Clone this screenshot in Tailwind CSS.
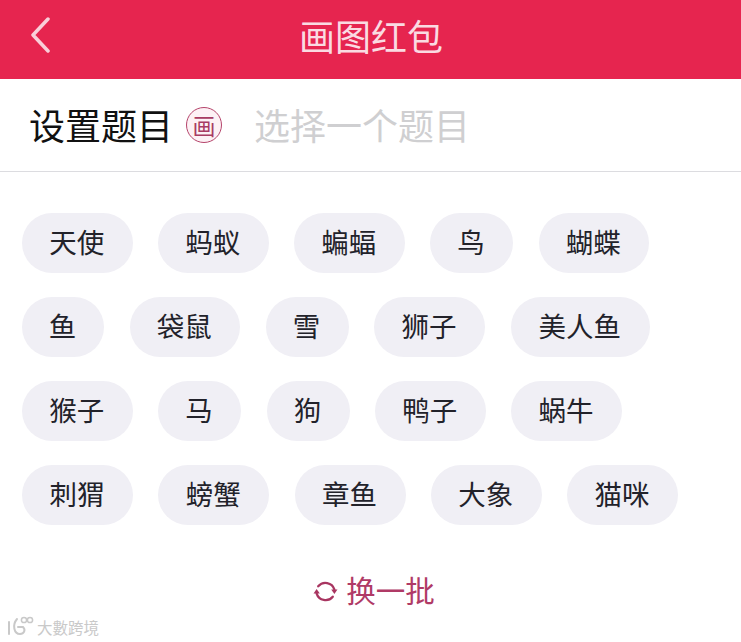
<!DOCTYPE html>
<html>
<head>
<meta charset="utf-8">
<title>画图红包</title>
<script src="https://cdn.jsdelivr.net/npm/@tailwindcss/browser@4"></script>
</head>
<body class="relative w-[741px] h-[642px] overflow-hidden bg-white font-['Noto_Sans_CJK_SC','Liberation_Sans',sans-serif]">

  <header class="relative h-[79px] bg-[#e6254f] flex items-center justify-center">
    <svg class="absolute left-[30px] top-[17px]" width="21" height="36" viewBox="0 0 21 36" fill="none" stroke="#f9cfd9" stroke-width="3.5" stroke-linecap="round" stroke-linejoin="round">
      <path d="M18 2 L3 18 L18 34"/>
    </svg>
    <h1 class="text-[36px] leading-none font-normal text-[#fadbe2] ml-[1px] -mt-[9px]">画图红包</h1>
  </header>

  <div class="h-[93px] border-b border-[#dcdce0] flex items-center pl-[30px]">
    <span class="text-[36px] leading-none text-[#111111] -mt-[3px] -ml-[1px]">设置题目</span>
    <span class="ml-[13px] w-[36px] h-[36px] rounded-full border-[1.5px] border-[#b5446b] bg-[#fdf1f5] flex items-center justify-center text-[23px] leading-none text-[#a83c63]">画</span>
    <span class="ml-[32px] text-[36px] leading-none font-normal text-[#cfcfd1] -mt-[3px]">选择一个题目</span>
  </div>

  <div class="pl-[22px] pt-[41px] flex flex-col gap-[24px] text-[27.5px] leading-none text-[#22222a]">
    <div class="flex gap-[25.5px]">
      <span class="h-[60px] w-[110.5px] pb-[2px] pr-[1px] rounded-full bg-[#f0eff5] flex items-center justify-center">天使</span>
      <span class="h-[60px] w-[110.5px] pb-[2px] pr-[1px] rounded-full bg-[#f0eff5] flex items-center justify-center">蚂蚁</span>
      <span class="h-[60px] w-[110.5px] pb-[2px] pr-[1px] rounded-full bg-[#f0eff5] flex items-center justify-center">蝙蝠</span>
      <span class="h-[60px] w-[83px] pb-[2px] pr-[1px] rounded-full bg-[#f0eff5] flex items-center justify-center">鸟</span>
      <span class="h-[60px] w-[110.5px] pb-[2px] pr-[1px] rounded-full bg-[#f0eff5] flex items-center justify-center">蝴蝶</span>
    </div>
    <div class="flex gap-[25.5px]">
      <span class="h-[60px] w-[82px] pb-[2px] pr-[1px] rounded-full bg-[#f0eff5] flex items-center justify-center">鱼</span>
      <span class="h-[60px] w-[110.5px] pb-[2px] pr-[1px] rounded-full bg-[#f0eff5] flex items-center justify-center">袋鼠</span>
      <span class="h-[60px] w-[83px] pb-[2px] pr-[1px] rounded-full bg-[#f0eff5] flex items-center justify-center">雪</span>
      <span class="h-[60px] w-[111px] pb-[2px] pr-[1px] rounded-full bg-[#f0eff5] flex items-center justify-center">狮子</span>
      <span class="h-[60px] w-[139.5px] pb-[2px] pr-[1px] rounded-full bg-[#f0eff5] flex items-center justify-center">美人鱼</span>
    </div>
    <div class="flex gap-[25.5px]">
      <span class="h-[60px] w-[110.5px] pb-[2px] pr-[1px] rounded-full bg-[#f0eff5] flex items-center justify-center">猴子</span>
      <span class="h-[60px] w-[83px] pb-[2px] pr-[1px] rounded-full bg-[#f0eff5] flex items-center justify-center">马</span>
      <span class="h-[60px] w-[83px] pb-[2px] pr-[1px] rounded-full bg-[#f0eff5] flex items-center justify-center">狗</span>
      <span class="h-[60px] w-[110.5px] pb-[2px] pr-[1px] rounded-full bg-[#f0eff5] flex items-center justify-center">鸭子</span>
      <span class="h-[60px] w-[111px] pb-[2px] pr-[1px] rounded-full bg-[#f0eff5] flex items-center justify-center">蜗牛</span>
    </div>
    <div class="flex gap-[25.25px]">
      <span class="h-[60px] w-[111px] pb-[2px] pr-[1px] rounded-full bg-[#f0eff5] flex items-center justify-center">刺猬</span>
      <span class="h-[60px] w-[111px] pb-[2px] pr-[1px] rounded-full bg-[#f0eff5] flex items-center justify-center">螃蟹</span>
      <span class="h-[60px] w-[111px] pb-[2px] pr-[1px] rounded-full bg-[#f0eff5] flex items-center justify-center">章鱼</span>
      <span class="h-[60px] w-[111px] pb-[2px] pr-[1px] rounded-full bg-[#f0eff5] flex items-center justify-center">大象</span>
      <span class="h-[60px] w-[111px] pb-[2px] pr-[1px] rounded-full bg-[#f0eff5] flex items-center justify-center">猫咪</span>
    </div>
  </div>

  <div class="mt-[52px] flex items-center justify-center pl-[7px] text-[#b03a66]">
    <svg class="mt-[1px]" width="25" height="25" viewBox="0 0 24 24" fill="none" stroke="#a83560" stroke-width="2.2" stroke-linecap="round">
      <path d="M5 7 A9 9 0 0 1 20.5 10"/>
      <path d="M19 17 A9 9 0 0 1 3.5 14"/>
      <path d="M17.5 10 H23.5 L20.5 14.5 Z" fill="#a83560" stroke="none"/>
      <path d="M0.5 14 H6.5 L3.5 9.5 Z" fill="#a83560" stroke="none"/>
    </svg>
    <span class="ml-[8px] text-[29.5px] leading-none -mt-[2px]">换一批</span>
  </div>

  <!-- watermark -->
  <div class="absolute left-[7px] top-[616px] flex items-center text-[#c9c9c9]">
    <svg width="27" height="20" viewBox="0 0 27 20" fill="none" stroke="#c9c9c9" stroke-width="2" stroke-linecap="round">
      <path d="M2 6 V18"/>
      <path d="M10 3 C5 9 7 18 13 18 C17 18 19 14 16 11 L11 11"/>
      <circle cx="17" cy="4" r="2.6" stroke-width="1.5"/>
      <circle cx="23" cy="4" r="2.6" stroke-width="1.5"/>
    </svg>
    <span class="ml-[3px] mt-[3px] text-[15.5px] leading-none font-['Noto_Sans_CJK_TC',sans-serif]">大數跨境</span>
  </div>

</body>
</html>
